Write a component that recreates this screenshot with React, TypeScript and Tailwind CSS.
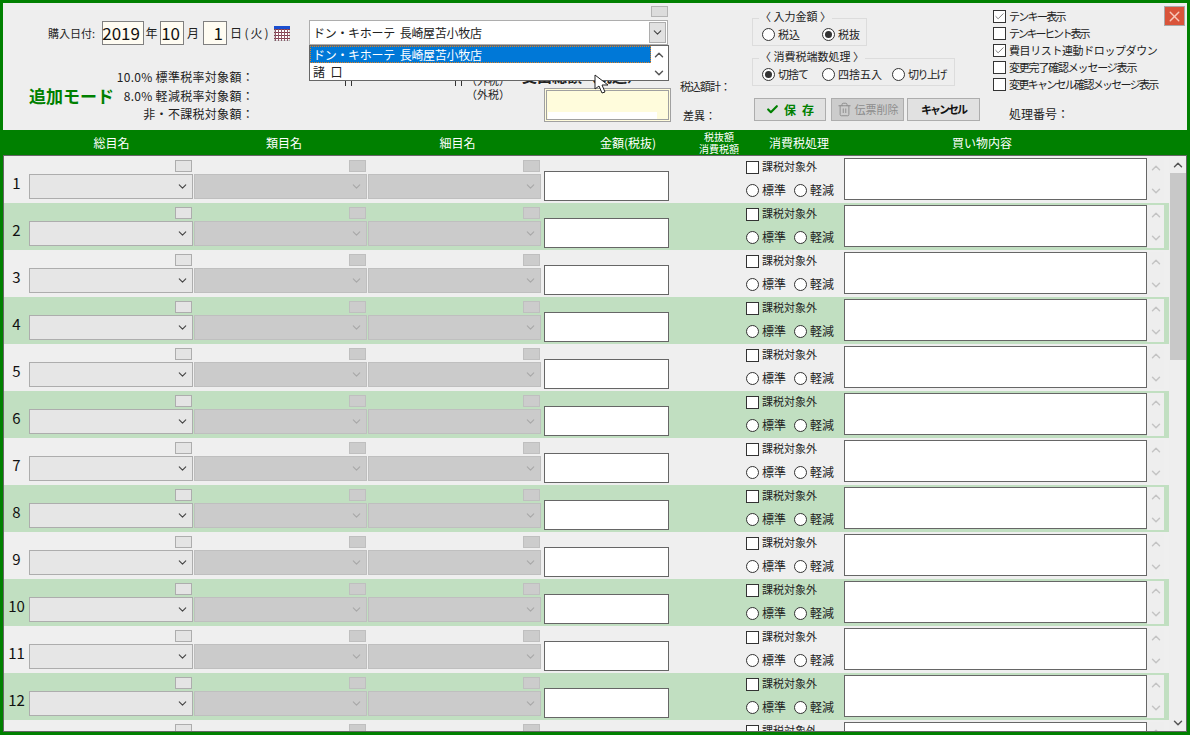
import { Check, ChevronDown, ChevronUp, Trash2, X } from 'lucide-react';

const font = { fontFamily: '"Noto Sans CJK JP", "Liberation Sans", sans-serif' };

const rows = [1, 2, 3, 4, 5, 6, 7, 8, 9, 10, 11, 12, 13];

const Radio = ({ on = false }: { on?: boolean }) => (
  <span className="flex h-[13px] w-[13px] shrink-0 items-center justify-center rounded-full border border-[#333] bg-white">
    {on && <span className="h-[7px] w-[7px] rounded-full bg-[#333]" />}
  </span>
);

const CheckBox = ({ on = false }: { on?: boolean }) => (
  <span className="flex h-[13px] w-[13px] shrink-0 items-center justify-center border border-[#333] bg-white">
    {on && <Check size={11} strokeWidth={1.5} className="text-[#444]" />}
  </span>
);

const RadioLabel = ({ label, on = false, w }: { label: string; on?: boolean; w: string }) => (
  <span className={`flex items-center gap-[3px] ${w}`}>
    <Radio on={on} />
    <span>{label}</span>
  </span>
);

const MiniButton = ({ off = false }: { off?: boolean }) => (
  <span
    className={`block h-[12px] w-[17px] border ${off ? 'border-[#bfbfbf] bg-[#cccccc]' : 'border-[#adadad] bg-[#e4e4e4]'}`}
  />
);

const ComboCell = ({ width, off = false }: { width: string; off?: boolean }) => (
  <div className={`flex shrink-0 flex-col items-end ${width}`}>
    <div className="mt-[4px] mb-[2px] pr-px">
      <MiniButton off={off} />
    </div>
    <div
      className={`flex h-[25px] w-full items-center justify-end border pr-[3px] ${
        off ? 'border-[#bfbfbf] bg-[#cbcbcb] text-[#a8a8a8]' : 'border-[#adadad] bg-[#e6e6e6] text-[#444]'
      }`}
    >
      <ChevronDown size={13} strokeWidth={2} />
    </div>
  </div>
);

const Row = ({ n }: { n: number }) => {
  const green = n % 2 === 0;
  return (
    <div className={`flex h-[47px] shrink-0 ${green ? 'bg-[#c1dfc1]' : 'bg-[#efefef]'}`}>
      <div className="flex w-[25px] shrink-0 items-center justify-center pt-[8px] text-[15px] text-[#111]">{n}</div>
      <ComboCell width="w-[164px]" />
      <div className="w-px shrink-0" />
      <ComboCell width="w-[173px]" off />
      <div className="w-px shrink-0" />
      <ComboCell width="w-[173px]" off />
      <div className="w-[3px] shrink-0" />
      <div className="mt-[15px] h-[30px] w-[125px] shrink-0 border border-[#666] bg-white" />
      <div className="w-[77px] shrink-0" />
      <div className="w-[98px] shrink-0 text-[12px] leading-none text-[#222]">
        <div className="mt-[5px] flex h-[13px] items-center gap-[3px]">
          <CheckBox />
          <span className="-mt-[2px] text-[11px] whitespace-nowrap">課税対象外</span>
        </div>
        <div className="mt-[9px] flex h-[14px] items-center whitespace-nowrap">
          <RadioLabel label="標準" w="w-[48px]" />
          <RadioLabel label="軽減" w="w-[48px]" />
        </div>
      </div>
      <div className="mt-[2px] h-[42px] w-[303px] shrink-0 border border-[#666] bg-white" />
      <div className="mt-[2px] flex h-[43px] w-[17px] shrink-0 flex-col items-center justify-between bg-[#eeeeee] py-[3px] text-[#c4c4c4]">
        <ChevronUp size={14} strokeWidth={2.5} />
        <ChevronDown size={14} strokeWidth={2.5} />
      </div>
    </div>
  );
};

const Brackets = () => (
  <span className="h-[6px] w-[7px] border-x border-[#333]" />
);

const OptionLine = ({ label, on = false, track }: { label: string; on?: boolean; track: string }) => (
  <div className="flex h-[17px] items-center gap-[3px] whitespace-nowrap">
    <CheckBox on={on} />
    <span className={track}>{label}</span>
  </div>
);

const CalendarIcon = () => (
  <svg width="16" height="15" viewBox="0 0 16 15" className="ml-[3px] shrink-0">
    <rect x="0" y="0" width="16" height="15" fill="#fff" stroke="#444" strokeWidth="0.5" />
    <rect x="0" y="0" width="16" height="3" fill="#1a4fd0" />
    {[3, 6, 9, 12].map((y) => (
      <line key={y} x1="0" x2="16" y1={y + 0.5} y2={y + 0.5} stroke="#8a3a4a" />
    ))}
    {[1, 4, 7, 10, 13].map((x) => (
      <line key={x} x1={x + 0.5} x2={x + 0.5} y1="3" y2="15" stroke="#8a5a6a" />
    ))}
  </svg>
);

const DateBox = ({ value, w }: { value: string; w: string }) => (
  <span className={`flex h-[24px] items-center justify-end border border-[#808080] bg-[#fffcf2] pr-[3px] text-[17px] text-[#111] ${w}`}>
    {value}
  </span>
);

const Header = () => (
  <div className="relative flex h-[127px] shrink-0 bg-[#eeeeee] text-[12px] text-[#222]">
    {/* date and totals */}
    <div className="w-[300px] shrink-0">
      <div className="mt-[18px] flex items-center pl-[45px] whitespace-nowrap">
        <span className="mr-[6px] w-[48px] text-[11px]">購入日付:</span>
        <DateBox value="2019" w="w-[42px]" />
        <span className="mx-px w-[13px] text-center">年</span>
        <span className="w-px" />
        <DateBox value="10" w="w-[24px]" />
        <span className="ml-[3px] mr-[5px] w-[11px] text-center">月</span>
        <DateBox value="1" w="w-[24px]" />
        <span className="ml-[3px] mr-[3px] w-[11px] text-center">日</span>
        <span className="w-[27px] text-center text-[12px] tracking-[2px]">(火)</span>
        <CalendarIcon />
      </div>
      <div className="mt-[23px] flex items-center">
        <span className="ml-[26px] w-[84px] text-[17px] font-bold whitespace-nowrap text-[#008000]">追加モード</span>
        <div className="w-[141px] text-right leading-[18.5px] tracking-[0.3px] whitespace-nowrap">
          <div>10.0% 標準税率対象額：</div>
          <div>8.0% 軽減税率対象額：</div>
          <div>非・不課税対象額：</div>
        </div>
      </div>
    </div>

    {/* store select, hidden totals under the list */}
    <div className="relative w-[377px] shrink-0">
      <div className="mt-[3px] ml-[348px] h-[11px] w-[17px] border border-[#b4b4b4] bg-[#dcdcdc]" />
      <div className="mt-[3px] ml-[6px] flex h-[25px] w-[359px] items-center justify-between border border-[#adadad] bg-white pl-[3px] pr-px">
        <span className="tracking-[-0.3px] whitespace-nowrap">ドン・キホーテ&nbsp;&nbsp;長崎屋苫小牧店</span>
        <span className="flex h-[21px] w-[17px] items-center justify-center border border-[#adadad] bg-[#e1e1e1] text-[#444]">
          <ChevronDown size={13} strokeWidth={2} />
        </span>
      </div>
      <div className="mt-[30px] flex">
        <div className="ml-[42px] flex w-[110px] items-start pt-[5px]">
          <Brackets />
        </div>
        <div className="flex w-[66px] flex-col items-start pt-[5px]">
          <Brackets />
        </div>
        <div className="-mt-[2px] -ml-[55px] mr-[22px] w-[60px] text-[11px] leading-[14px] whitespace-nowrap">
          <div>（外税）</div>
          <div>（外税）</div>
        </div>
        <div className="-mt-[7px] -ml-[4px] w-[129px]">
          <div className="-ml-[22px] h-[20px] text-[15px] leading-[15px] font-bold whitespace-nowrap text-[#222]">支出総額（税込）</div>
          <div className="h-[34px] w-[127px] border-[3px] border-double border-[#a0a0a0] bg-[#fffcdc]">
            <div className="mt-[21px] ml-px h-[7px] w-[109px] bg-white" />
          </div>
        </div>
      </div>

      {/* open dropdown */}
      <div className="absolute top-[42px] left-[6px] h-[36px] w-[360px] border border-[#666] bg-white">
        <div className="flex h-[17px] w-[341px] items-center border border-dotted border-[#e08020] bg-[#0078d7] pl-[2px] tracking-[-0.3px] whitespace-nowrap text-white">
          ドン・キホーテ&nbsp;&nbsp;長崎屋苫小牧店
        </div>
        <div className="flex h-[17px] items-center pl-[3px] whitespace-nowrap">諸&nbsp;&nbsp;口</div>
        <div className="absolute top-[2px] right-[2px] flex h-[32px] flex-col items-center justify-between text-[#555]">
          <ChevronUp size={14} strokeWidth={2.5} />
          <ChevronDown size={14} strokeWidth={2.5} />
        </div>
      </div>

      {/* mouse pointer */}
      <svg width="17" height="20" viewBox="0 0 17 20" className="absolute top-[71px] left-[291px]">
        <path d="M1 1 L1 15 L5 12 L8 19 L11 18 L8 11 L14 11 Z" fill="#fff" stroke="#222" strokeWidth="1" />
      </svg>
    </div>

    <div className="w-[72px] shrink-0 pt-[75px] text-[11px] whitespace-nowrap">
      <div className="h-[29px] tracking-[-1px]">税込額計：</div>
      <div className="pl-[3px]">差異：</div>
    </div>

    {/* amount options and actions */}
    <div className="w-[241px] shrink-0">
      <div className="relative mt-[15px] h-[28px] w-[115px] border border-[#dcdcdc]">
        <span className="absolute -top-[8px] left-[6px] bg-[#eeeeee] px-px text-[11px] leading-none whitespace-nowrap">〈 入力金額 〉</span>
        <div className="flex h-full items-center pt-[4px] pl-[9px] text-[11px]">
          <RadioLabel label="税込" w="w-[60px]" />
          <RadioLabel label="税抜" on w="w-[44px]" />
        </div>
      </div>
      <div className="relative mt-[12px] h-[28px] w-[203px] border border-[#dcdcdc]">
        <span className="absolute -top-[8px] left-[6px] bg-[#eeeeee] px-px text-[11px] leading-none whitespace-nowrap">〈 消費税端数処理 〉</span>
        <div className="flex h-full items-center pt-[4px] pl-[9px] text-[11px] whitespace-nowrap">
          <RadioLabel label="切捨て" on w="w-[60px] tracking-[-1px]" />
          <RadioLabel label="四捨五入" w="w-[70px]" />
          <RadioLabel label="切り上げ" w="w-[60px] tracking-[-1.5px]" />
        </div>
      </div>
      <div className="mt-[12px] ml-[2px] flex gap-[5px] whitespace-nowrap">
        <button className="flex h-[23px] w-[72px] items-center justify-center gap-[5px] border border-[#adadad] bg-[#e1e1e1] text-[12px] font-bold tracking-[6px] text-[#008000]">
          <Check size={13} strokeWidth={4} />
          <span className="-mr-[6px]">保存</span>
        </button>
        <button className="flex h-[23px] w-[73px] items-center justify-center gap-[3px] border border-[#adadad] bg-[#cccccc] text-[11px] text-[#8c8c8c]">
          <Trash2 size={15} strokeWidth={1.5} />
          伝票削除
        </button>
        <button className="-ml-[2px] h-[23px] w-[73px] border border-[#adadad] bg-[#e1e1e1] text-[11px] font-bold tracking-[-2px] text-[#111]">
          キャンセル
        </button>
      </div>
    </div>

    <div className="w-[168px] shrink-0 pt-[5px] text-[11px]">
      <OptionLine label="テンキー表示" on track="tracking-[-1.7px]" />
      <OptionLine label="テンキーヒント表示" track="tracking-[-2.2px]" />
      <OptionLine label="費目リスト連動ドロップダウン" on track="tracking-[-0.4px]" />
      <OptionLine label="変更完了確認メッセージ表示" track="tracking-[-1.2px]" />
      <OptionLine label="変更キャンセル確認メッセージ表示" track="tracking-[-1.7px]" />
      <div className="mt-[12px] pl-[16px] text-[12px]">処理番号：</div>
    </div>

    <div className="pt-[3px] pl-[3px]">
      <div className="flex h-[20px] w-[21px] items-center justify-center border border-[#a9a9a9] bg-[#d9543a] text-[#f7c9bb]">
        <X size={17} strokeWidth={2} />
      </div>
    </div>
  </div>
);

const TableHead = () => (
  <div className="flex h-[25px] shrink-0 items-center bg-[#008000] text-center text-[12px] whitespace-nowrap text-white">
    <div className="w-[26px]" />
    <div className="w-[165px]">総目名</div>
    <div className="w-[174px] pl-[6px]">類目名</div>
    <div className="w-[173px] pl-[6px]">細目名</div>
    <div className="w-[152px] pl-[22px]">金額(税抜)</div>
    <div className="w-[52px] text-[10px] leading-[12px]">
      <div>税抜額</div>
      <div>消費税額</div>
    </div>
    <div className="w-[108px]">消費税処理</div>
    <div className="w-[258px]">買い物内容</div>
  </div>
);

const App = () => (
  <div style={font} className="flex h-[735px] w-[1190px] flex-col overflow-hidden bg-[#008000] p-[3px]">
    <Header />
    <TableHead />
    <div className="flex min-h-0 flex-1 border-y border-l border-[#666]">
      <div className="flex min-w-0 flex-1 flex-col overflow-hidden">
        {rows.map((n) => (
          <Row key={n} n={n} />
        ))}
      </div>
      <div className="flex w-[18px] shrink-0 flex-col border-r border-[#666] bg-[#eeeeee] pl-px">
        <div className="flex h-[17px] shrink-0 items-center justify-center text-[#555]">
          <ChevronUp size={14} strokeWidth={2.5} />
        </div>
        <div className="h-[187px] shrink-0 bg-[#c8c8c8]" />
        <div className="flex-1" />
        <div className="flex h-[17px] shrink-0 items-center justify-center text-[#555]">
          <ChevronDown size={14} strokeWidth={2.5} />
        </div>
      </div>
    </div>
  </div>
);

export default App;
